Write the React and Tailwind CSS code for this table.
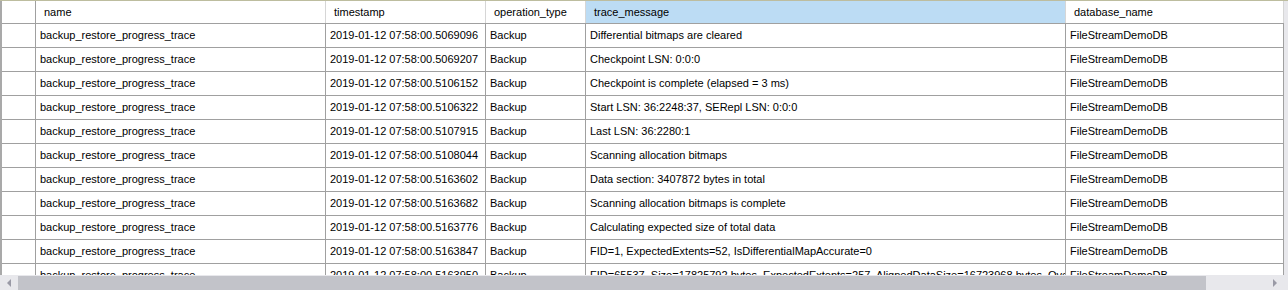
import React from "react";

const cols = ["w-[34px]", "w-[290px]", "w-[160px]", "w-[100px]", "w-[480px]", "w-[218px]"];

const rows = [
  ["2019-01-12 07:58:00.5069096", "Differential bitmaps are cleared"],
  ["2019-01-12 07:58:00.5069207", "Checkpoint LSN: 0:0:0"],
  ["2019-01-12 07:58:00.5106152", "Checkpoint is complete (elapsed = 3 ms)"],
  ["2019-01-12 07:58:00.5106322", "Start LSN: 36:2248:37, SERepl LSN: 0:0:0"],
  ["2019-01-12 07:58:00.5107915", "Last LSN: 36:2280:1"],
  ["2019-01-12 07:58:00.5108044", "Scanning allocation bitmaps"],
  ["2019-01-12 07:58:00.5163602", "Data section: 3407872 bytes in total"],
  ["2019-01-12 07:58:00.5163682", "Scanning allocation bitmaps is complete"],
  ["2019-01-12 07:58:00.5163776", "Calculating expected size of total data"],
  ["2019-01-12 07:58:00.5163847", "FID=1, ExpectedExtents=52, IsDifferentialMapAccurate=0"],
  [
    "2019-01-12 07:58:00.5163950",
    "FID=65537, Size=17825792 bytes, ExpectedExtents=257, AlignedDataSize=16723968 bytes, Ove",
  ],
];

const headers = ["", "name", "timestamp", "operation_type", "trace_message", "database_name"];

export default function App() {
  return (
    <div
      className="w-[1288px] h-[290px] overflow-hidden bg-white text-black flex flex-col border-t border-[#bdbd9f]"
      style={{ fontFamily: '"Liberation Sans", Arial, sans-serif' }}
    >
      <div className="flex flex-1 min-h-0">
        <div className="flex-1 min-w-0 overflow-hidden border-l-2 border-[#a9a9a9] text-[11px] leading-none">
          {/* header */}
          <div className="flex h-[23px] border-b border-[#a0a0a0]">
            {headers.map((h, i) => (
              <div
                key={i}
                className={
                  cols[i] +
                  " shrink-0 flex items-center whitespace-nowrap overflow-hidden border-r " +
                  (i === 0 ? "border-[#a0a0a0] " : "border-[#d6d6d6] pl-[8px] ") +
                  (i === 4 ? "bg-[#bcdcf4] pl-[7px]" : "")
                }
              >
                {h}
              </div>
            ))}
          </div>
          {/* rows */}
          {rows.map((r, i) => (
            <div key={i} className="flex h-[24px] border-b border-[#a0a0a0]">
              {["", "backup_restore_progress_trace", r[0], "Backup", r[1], "FileStreamDemoDB"].map((c, j) => (
                <div
                  key={j}
                  className={
                    cols[j] +
                    " shrink-0 flex items-center whitespace-nowrap overflow-hidden border-r border-[#a0a0a0] pl-[4px]"
                  }
                >
                  {c}
                </div>
              ))}
            </div>
          ))}
        </div>
        <div className="w-[4px] shrink-0 bg-[#e8e8ec]" />
      </div>
      {/* horizontal scrollbar */}
      <div className="h-[15px] shrink-0 bg-[#e8e8ec] flex items-stretch pt-[1px]">
        <div className="w-[18px] shrink-0 flex items-center justify-center">
          <svg width="5" height="8" viewBox="0 0 5 8">
            <path d="M4 0 L0 4 L4 8 Z" fill="#9a9aa6" />
          </svg>
        </div>
        <div className="w-[1188px] shrink-0 bg-[#c2c3c9]" />
        <div className="flex-1 flex items-center justify-end pr-[10px]">
          <svg width="5" height="8" viewBox="0 0 5 8">
            <path d="M0 0 L4 4 L0 8 Z" fill="#9a9aa6" />
          </svg>
        </div>
      </div>
    </div>
  );
}
